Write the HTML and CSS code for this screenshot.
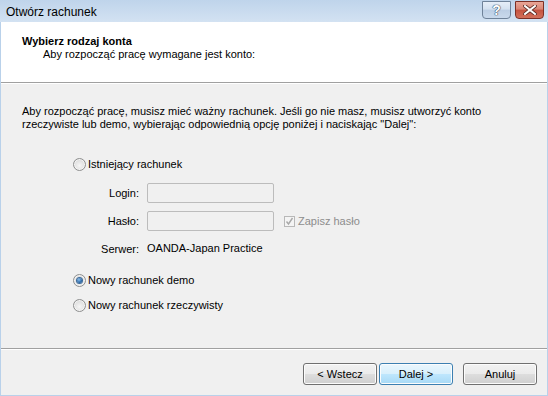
FILE: index.html
```
<!DOCTYPE html>
<html lang="pl">
<head>
  <meta charset="UTF-8" />
  <title>Otwórz rachunek</title>
  <link rel="stylesheet" href="styles.css">
</head>
<body>
  <div class="window">
    <div class="titlebar">
      <span class="caption">Otwórz rachunek</span>
      <div class="caption-buttons">
        <span class="cbtn help">?</span>
        <span class="cbtn close">
          <svg width="14" height="10" viewBox="0 0 14 10">
            <path d="M2 1 L12 9 M12 1 L2 9" stroke="#5a2a22" stroke-width="3.6" stroke-linecap="square"/>
            <path d="M2 1 L12 9 M12 1 L2 9" stroke="#ffffff" stroke-width="2" stroke-linecap="square"/>
          </svg>
        </span>
      </div>
    </div>

    <div class="header">
      <div class="header-title">Wybierz rodzaj konta</div>
      <div class="header-sub">Aby rozpocząć pracę wymagane jest konto:</div>
    </div>

    <div class="content">
      <p class="intro">Aby rozpocząć pracę, musisz mieć ważny rachunek. Jeśli go nie masz, musisz utworzyć konto<br>rzeczywiste lub demo, wybierając odpowiednią opcję poniżej i naciskając "Dalej":</p>

      <div class="options">
        <div class="radio"><span class="radio-dot"></span>Istniejący rachunek</div>

        <div class="creds">
          <span class="cred-label">Login:</span>
          <span class="textbox"></span>
          <span></span>

          <span class="cred-label">Hasło:</span>
          <span class="textbox"></span>
          <span class="check">
            <span class="check-box">
              <svg width="9" height="9" viewBox="0 0 9 9"><path d="M1.5 4.5 L3.5 7 L7.5 1" fill="none" stroke="#a8a8a8" stroke-width="1.4"/></svg>
            </span>
            Zapisz hasło
          </span>

          <span class="cred-label">Serwer:</span>
          <span class="server">OANDA-Japan Practice</span>
          <span></span>
        </div>

        <div class="radio radio-demo"><span class="radio-dot selected"></span>Nowy rachunek demo</div>
        <div class="radio radio-real"><span class="radio-dot"></span>Nowy rachunek rzeczywisty</div>
      </div>
    </div>

    <div class="footer">
      <button class="btn">&lt; Wstecz</button>
      <button class="btn default">Dalej &gt;</button>
      <button class="btn cancel">Anuluj</button>
    </div>
  </div>
</body>
</html>
```

FILE: styles.css
```
* {
  box-sizing: border-box;
}
body {
  margin: 0;
  font-family: 'Liberation Sans', Arial, sans-serif;
  font-size: 11px;
  color: #000;
  background: #b9d1ea;
}
.window {
  width: 548px;
  height: 396px;
  display: flex;
  flex-direction: column;
  border: 1px solid #b9d1ea;
  border-top: none;
  background: #f0f0f0;
}
.titlebar {
  height: 22px;
  margin: 0 -1px;
  display: flex;
  align-items: flex-start;
  background: linear-gradient(to bottom, #bfd4eb, #d3e2f2);
}
.caption {
  font-size: 12px;
  padding: 5px 0 0 6px;
  line-height: 14px;
}
.caption-buttons {
  margin-left: auto;
  margin-right: 4px;
  display: flex;
  gap: 4px;
  padding-top: 1px;
}
.cbtn {
  width: 29px;
  height: 18px;
  border: 1px solid #6f8299;
  border-radius: 0 0 4px 4px;
  display: flex;
  align-items: center;
  justify-content: center;
}
.help {
  background: linear-gradient(to bottom, #e6eef8 0%, #d4e1f0 45%, #bccee4 50%, #c9d9ec 100%);
  font-size: 14px;
  font-weight: bold;
  color: #fff;
  text-shadow: 0 0 1px #33475f, 0 0 1px #33475f, 0 0 1px #33475f;
}
.close {
  border-color: #7c3026;
  background: linear-gradient(to bottom, #e9a697 0%, #d98575 45%, #c5523f 50%, #d2705b 100%);
}
.header {
  height: 61px;
  background: #fff;
  padding: 12px 0 0 21px;
  border-bottom: 1px solid #a0a0a0;
}
.header-title {
  font-weight: bold;
  line-height: 14px;
}
.header-sub {
  line-height: 13px;
  padding-left: 21px;
}
.content {
  flex: 1;
  border-top: 1px solid #fff;
  border-bottom: 1px solid #a0a0a0;
  padding: 21px 0 0 21px;
}
.intro {
  margin: 0;
  line-height: 13px;
}
.options {
  padding: 27px 0 0 51px;
}
.radio {
  display: flex;
  align-items: center;
  gap: 2px;
  height: 13px;
  line-height: 13px;
}
.radio-dot {
  width: 13px;
  height: 13px;
  border-radius: 50%;
  border: 1px solid #8e8f8f;
  background: radial-gradient(circle at 50% 60%, #f6f6f6 0%, #e2e2e2 55%, #cfcfcf 100%);
  box-shadow: inset 0 0 0 1px #f4f4f4;
  display: flex;
  align-items: center;
  justify-content: center;
}
.radio-dot.selected::after {
  content: '';
  width: 5px;
  height: 5px;
  border-radius: 50%;
  background: radial-gradient(circle at 40% 35%, #8cc0ee, #1d5b9c 70%);
  box-shadow: 0 0 0 1px #3d6a98;
}
.creds {
  display: grid;
  grid-template-columns: 66px 127px auto;
  column-gap: 8px;
  row-gap: 8px;
  align-items: center;
  padding-top: 12px;
}
.cred-label {
  text-align: right;
}
.textbox {
  height: 20px;
  border: 1px solid #bcbcbc;
  border-radius: 2px;
  background: #f0f0f0;
}
.check {
  display: flex;
  align-items: center;
  gap: 3px;
  padding-left: 2px;
  color: #8d8d8d;
}
.check-box {
  width: 11px;
  height: 11px;
  border: 1px solid #b8b8b8;
  background: #f4f4f4;
  display: flex;
  align-items: center;
  justify-content: center;
}
.server {
  line-height: 13px;
  margin-top: 3px;
}
.creds .cred-label:nth-last-child(3) {
  margin-top: 3px;
}
.radio-demo {
  margin-top: 19px;
}
.radio-real {
  margin-top: 12px;
}
.footer {
  height: 46px;
  border-top: 1px solid #fff;
  display: flex;
  justify-content: flex-end;
  align-items: flex-start;
  padding: 13px 10px 0 0;
}
.btn {
  width: 74px;
  height: 22px;
  margin-left: 2px;
  font-family: 'Liberation Sans', Arial, sans-serif;
  font-size: 11px;
  color: #000;
  border: 1px solid #707070;
  border-radius: 3px;
  background: linear-gradient(to bottom, #f2f2f2 0%, #ebebeb 48%, #dddddd 52%, #cfcfcf 100%);
  box-shadow: inset 0 0 0 1px #fcfcfc;
  padding: 0;
}
.btn.default {
  border-color: #3c7fb1;
  background: linear-gradient(to bottom, #eaf6fd 0%, #d9f0fc 48%, #bee6fd 52%, #a7d9f5 100%);
}
.btn.cancel {
  margin-left: 10px;
}
```
